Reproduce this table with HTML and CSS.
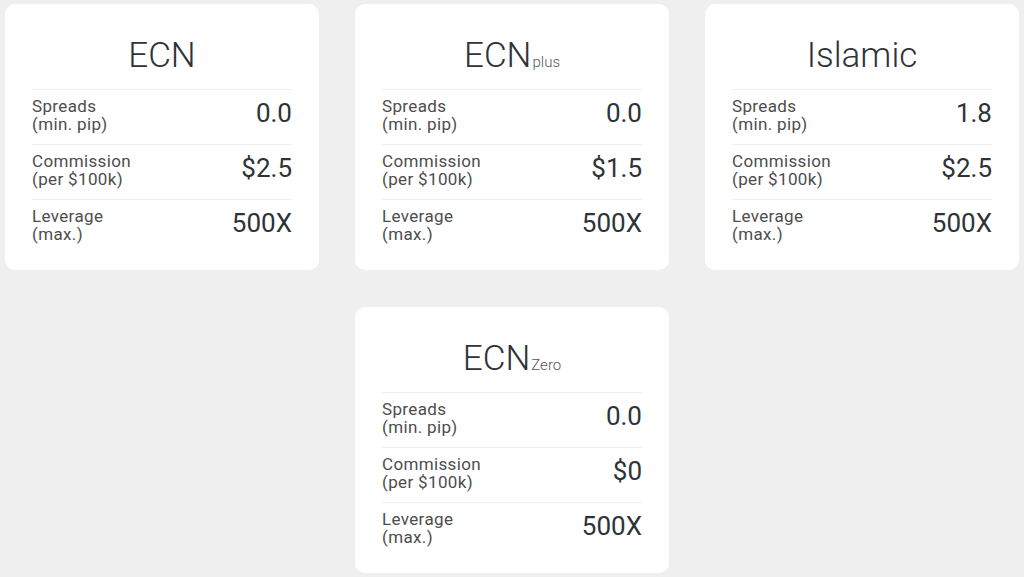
FILE: index.html
```html
<!DOCTYPE html>
<html lang="en">
<head>
<meta charset="utf-8">
<title>Account types</title>
<link rel="stylesheet" href="styles.css">
</head>
<body>
<main class="grid">
  <section class="card">
    <h2 class="title">ECN</h2>
    <div class="row"><div class="label">Spreads<br>(min. pip)</div><div class="value">0.0</div></div>
    <div class="row"><div class="label">Commission<br>(per $100k)</div><div class="value">$2.5</div></div>
    <div class="row"><div class="label">Leverage<br>(max.)</div><div class="value">500X</div></div>
  </section>
  <section class="card">
    <h2 class="title">ECN<span class="sub">plus</span></h2>
    <div class="row"><div class="label">Spreads<br>(min. pip)</div><div class="value">0.0</div></div>
    <div class="row"><div class="label">Commission<br>(per $100k)</div><div class="value">$1.5</div></div>
    <div class="row"><div class="label">Leverage<br>(max.)</div><div class="value">500X</div></div>
  </section>
  <section class="card">
    <h2 class="title">Islamic</h2>
    <div class="row"><div class="label">Spreads<br>(min. pip)</div><div class="value">1.8</div></div>
    <div class="row"><div class="label">Commission<br>(per $100k)</div><div class="value">$2.5</div></div>
    <div class="row"><div class="label">Leverage<br>(max.)</div><div class="value">500X</div></div>
  </section>
  <section class="card card-center">
    <h2 class="title">ECN<span class="sub">Zero</span></h2>
    <div class="row"><div class="label">Spreads<br>(min. pip)</div><div class="value">0.0</div></div>
    <div class="row"><div class="label">Commission<br>(per $100k)</div><div class="value">$0</div></div>
    <div class="row"><div class="label">Leverage<br>(max.)</div><div class="value">500X</div></div>
  </section>
</main>
</body>
</html>
```
FILE: styles.css
```css
html, body {
  margin: 0;
  padding: 0;
}
body {
  background: #efefef;
  font-family: Roboto, "Liberation Sans", sans-serif;
  color: #333;
  width: 1024px;
  height: 577px;
  overflow: hidden;
}
.grid {
  display: grid;
  grid-template-columns: repeat(3, 314px);
  column-gap: 36px;
  row-gap: 37px;
  padding: 4px 0 0 5px;
}
.card {
  background: #fff;
  border-radius: 10px;
  padding: 0 27px 16px;
  box-sizing: border-box;
  height: 266px;
}
.card-center {
  grid-column: 2;
}
.title {
  margin: 0;
  padding-top: 31.5px;
  margin-bottom: 13.5px;
  height: 40px;
  font-weight: 300;
  font-size: 35px;
  line-height: 40px;
  text-align: center;
  color: #2e3338;
}
.sub {
  font-size: 15px;
  line-height: 1;
  color: #555;
  margin-left: 1px;
}
.row {
  display: flex;
  justify-content: space-between;
  align-items: flex-start;
  border-top: 1px solid #eeeeee;
  padding: 7px 0 11px;
}
.label {
  font-size: 17px;
  letter-spacing: 0.35px;
  line-height: 18px;
  font-weight: 400;
  color: #4d4d4d;
  height: 36px;
}
.value {
  font-size: 26px;
  line-height: 30px;
  margin-top: 1px;
  font-weight: 400;
  color: #2e3338;
}
```
